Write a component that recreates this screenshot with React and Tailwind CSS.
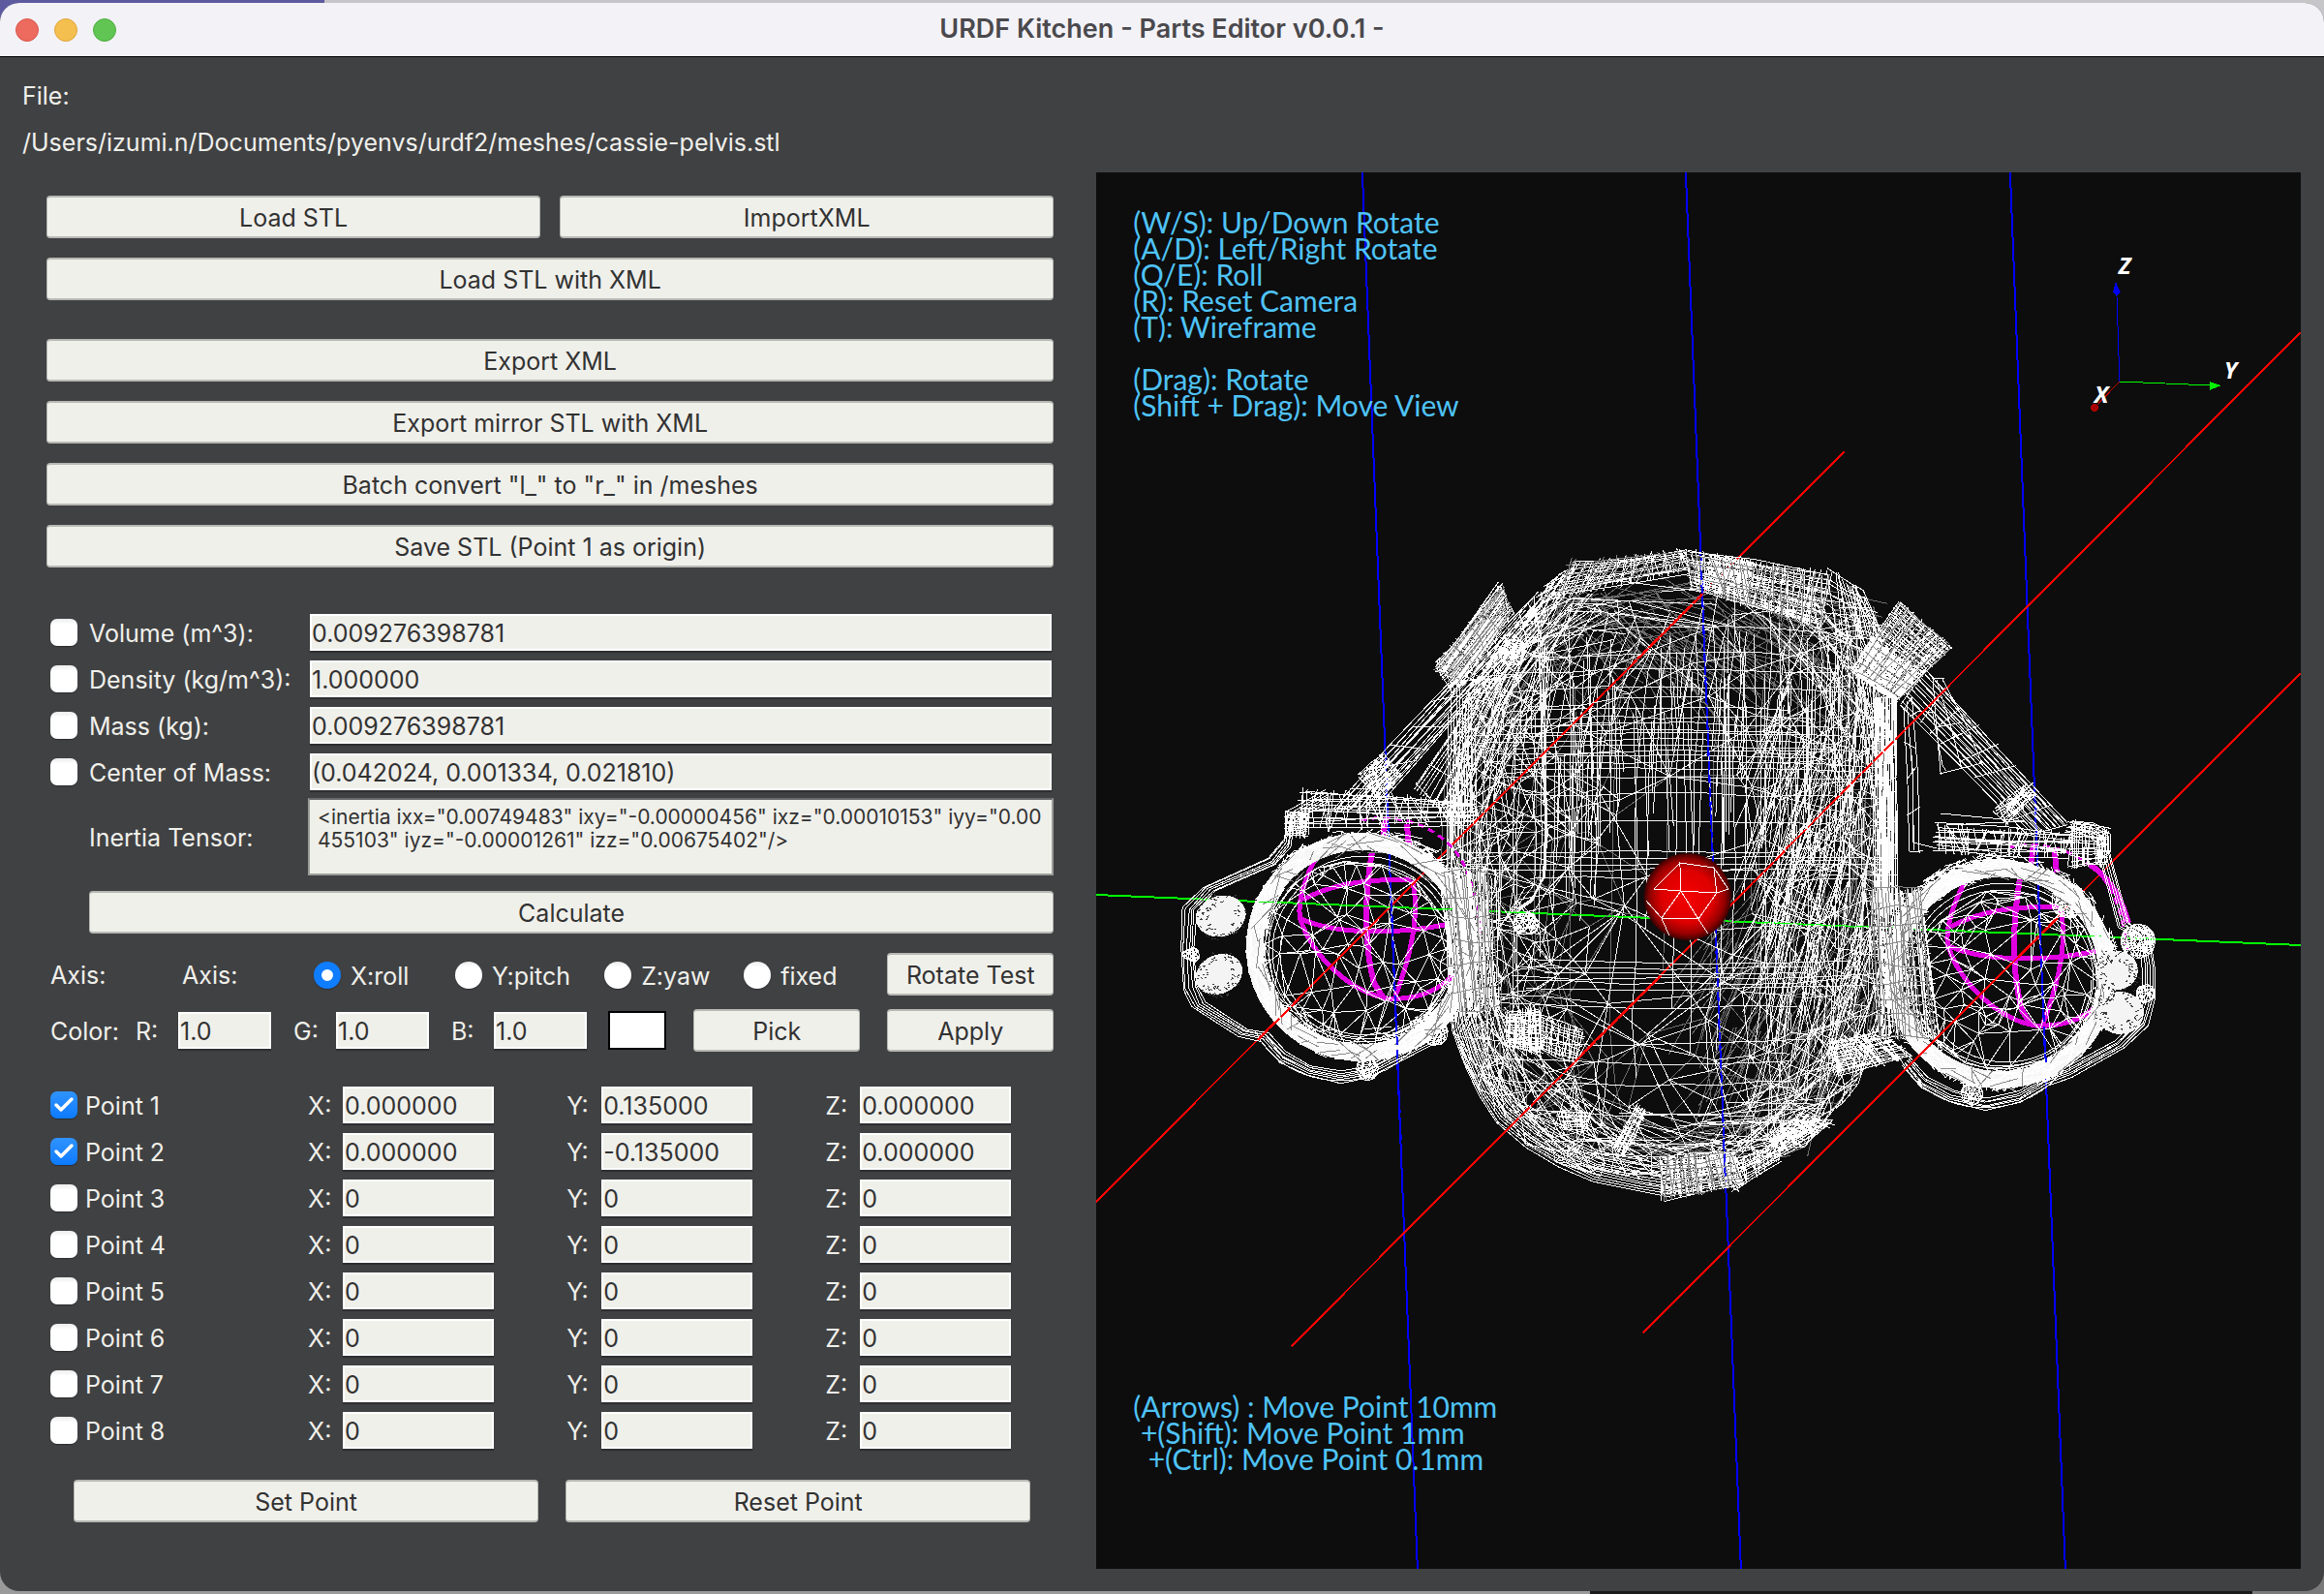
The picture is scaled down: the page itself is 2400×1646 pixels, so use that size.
import { Check } from "lucide-react";

/* ---------- wireframe geometry ---------- */

let seed = 90210;
const rnd = () => {
  seed = (seed + 0x6d2b79f5) | 0;
  let t = Math.imul(seed ^ (seed >>> 15), 1 | seed);
  t = (t + Math.imul(t ^ (t >>> 7), 61 | t)) ^ t;
  return ((t ^ (t >>> 14)) >>> 0) / 4294967296;
};
const jit = (n) => (rnd() - 0.5) * 2 * n;
const mix = (a, b, t) => a + (b - a) * t;
const r1 = (n) => Math.round(n * 10) / 10;
const seg = (x1, y1, x2, y2) => `M${r1(x1)} ${r1(y1)}L${r1(x2)} ${r1(y2)}`;
const poly = (pts) => "M" + pts.map(([x, y]) => `${r1(x)} ${r1(y)}`).join("L");

/* Bowyer-Watson triangulation, returned as unique edges. */
function triangulate(points) {
  const n = points.length;
  const [ox, oy] = points[0];
  const pts = [...points.map(([x, y]) => [x - ox, y - oy]), [-9000, -7000], [9000, -7100], [100, 9000]];
  const circle = (a, b, c) => {
    const [ax, ay] = pts[a];
    const [bx, by] = pts[b];
    const [cx, cy] = pts[c];
    const d = 2 * (ax * (by - cy) + bx * (cy - ay) + cx * (ay - by)) || 1e-6;
    const a2 = ax * ax + ay * ay;
    const b2 = bx * bx + by * by;
    const c2 = cx * cx + cy * cy;
    const x = (a2 * (by - cy) + b2 * (cy - ay) + c2 * (ay - by)) / d;
    const y = (a2 * (cx - bx) + b2 * (ax - cx) + c2 * (bx - ax)) / d;
    return { v: [a, b, c], x, y, r: (ax - x) ** 2 + (ay - y) ** 2 };
  };
  let tris = [circle(n, n + 1, n + 2)];
  for (let i = 0; i < n; i++) {
    const [px, py] = pts[i];
    const edges = new Map();
    tris = tris.filter((t) => {
      if ((px - t.x) ** 2 + (py - t.y) ** 2 > t.r) return true;
      [[0, 1], [1, 2], [2, 0]].forEach(([p, q]) => {
        const a = Math.min(t.v[p], t.v[q]);
        const b = Math.max(t.v[p], t.v[q]);
        const key = a * 10000 + b;
        if (edges.has(key)) edges.set(key, null);
        else edges.set(key, [a, b]);
      });
      return false;
    });
    edges.forEach((e) => e && tris.push(circle(e[0], e[1], i)));
  }
  const out = new Map();
  tris.forEach(({ v }) => {
    [[0, 1], [1, 2], [2, 0]].forEach(([p, q]) => {
      const a = Math.min(v[p], v[q]);
      const b = Math.max(v[p], v[q]);
      if (b < n) out.set(a * 10000 + b, [points[a], points[b]]);
    });
  });
  return [...out.values()];
}

const LEFT = [[572, 1715], [580, 1650], [588, 1614], [612, 1588], [640, 1560], [700, 1515], [760, 1498], [900, 1492], [1054, 1496], [1100, 1512], [1151, 1536], [1180, 1570], [1201, 1603], [1224, 1654], [1236, 1730]];
const RIGHT = [[572, 1780], [580, 1830], [590, 1890], [611, 1925], [640, 1945], [720, 1956], [900, 1958], [1040, 1950], [1105, 1930], [1151, 1898], [1178, 1880], [1213, 1815], [1236, 1760]];
const at = (table, y) => {
  for (let i = 1; i < table.length; i++) {
    if (y <= table[i][0]) {
      const [y0, x0] = table[i - 1];
      const [y1, x1] = table[i];
      return mix(x0, x1, Math.max(0, (y - y0) / (y1 - y0)));
    }
  }
  return table[table.length - 1][1];
};
const shell = (k, y) => mix(at(LEFT, y), at(RIGHT, y), (k + 1) / 2);

const edgePoint = (t, s = 1) => {
  const a = t * Math.PI * 2;
  const y = 904 - Math.cos(a) * 332;
  const k = Math.sin(a) >= 0 ? 1 : -1;
  return [mix(1735, shell(k, y), s), mix(904, y, s)];
};

function buildBody() {
  let fine = "";
  let dim = "";
  for (let i = 0; i < 44; i++) {
    const k = Math.sin(mix(-1.5, 1.5, i / 43)) + jit(0.03);
    const pts = [];
    const top = 600 + rnd() * 70;
    const end = 1200 - rnd() * 260;
    for (let y = top; y < end; y += 60) pts.push([shell(k, y) + jit(2), y]);
    if (i % 3) fine += poly(pts);
    else dim += poly(pts);
  }
  const bands = [660, 684, 700, 718, 738, 748, 754, 760, 764, 770, 776, 781, 786, 792, 798, 806, 824, 850, 880, 886, 892, 898, 906, 990, 995, 1000, 1005, 1010, 1016, 1034, 1070, 1090, 1110, 1140, 1168];
  bands.forEach((y) => {
    const a = mix(-0.98, -0.5, rnd());
    const b = mix(0.5, 0.98, rnd());
    const bow = (y - 900) * 0.05;
    const pts = [];
    for (let i = 0; i <= 6; i++) {
      const k = mix(a, b, i / 6);
      pts.push([shell(k, y), y + bow * (1 - k * k) + jit(2)]);
    }
    fine += poly(pts);
  });
  const layers = [
    [230, 1, 0],
    [230, 0.99, 0.35],
    [150, 0.8, 0],
  ];
  layers.forEach(([count, spread, hollow]) => {
    const nodes = [];
    for (let i = 0; i < count; i++) {
      const y = mix(615, 1215, rnd());
      const k = Math.sign(jit(1)) * mix(hollow, spread, Math.sqrt(rnd()));
      nodes.push([shell(k, y), y]);
    }
    triangulate(nodes).forEach(([a, b]) => {
      const len = Math.hypot(a[0] - b[0], a[1] - b[1]);
      if (len > 130) return;
      if (rnd() < 0.68) fine += seg(...a, ...b);
      else dim += seg(...a, ...b);
    });
  });
  for (let i = 0; i < 420; i++) {
    const t = rnd();
    const a = edgePoint(t, mix(0.82, 1, rnd()));
    const b = edgePoint(t + mix(0.03, 0.13, rnd()), mix(0.74, 1, rnd()));
    if (Math.hypot(a[0] - b[0], a[1] - b[1]) > 190) continue;
    if (rnd() < 0.5) fine += seg(...a, ...b);
    else dim += seg(...a, ...b);
  }
  for (let i = 0; i < 90; i++) {
    const x = mix(1600, 1900, rnd());
    const y = mix(640, 790, rnd());
    fine += seg(x, y, x + jit(6), y + mix(40, 170, rnd()));
  }
  for (let i = 0; i < 110; i++) {
    const x = mix(1830, 1930, rnd());
    const y = mix(700, 1040, rnd());
    fine += seg(x, y, x - mix(5, 50, rnd()), y + mix(60, 150, rnd()));
  }
  for (let i = 0; i < 70; i++) {
    const x = mix(1620, 1860, rnd());
    const y = mix(600, 680, rnd());
    dim += seg(x, y, x + mix(40, 120, rnd()), y + mix(20, 110, rnd()));
    const u = mix(1780, 1900, rnd());
    const v = mix(900, 1100, rnd());
    dim += seg(u, v, u - mix(20, 70, rnd()), v + mix(60, 120, rnd()));
  }
  for (let i = 0; i < 13; i++) {
    const s = 1 - i * 0.008;
    const pts = [];
    for (let t = 0.51; t < 0.74; t += 0.02) pts.push(edgePoint(t, s));
    fine += poly(pts.map(([x, y]) => [x + jit(1), y + jit(1)]));
  }
  for (let i = 0; i < 9; i++) {
    fine += poly([[1588 + i * 2, 640 + i * 6], [1594 + jit(3), 760], [1597 + jit(2), 860], [1594 + jit(2), 905], [1583, 928 + jit(3)], [1567, 940 + jit(3)]]);
    fine += seg(1496 + i * 3, 720 + jit(20), 1494 + i * 3, 880 + jit(30));
  }
  return { fine, dim };
}

/* Bilinear hatch of a quad: long strands plus cross facets. */
function quad([a, b, c, d], along, across, fuzz = 2) {
  const p = (u, v) => [
    mix(mix(a[0], b[0], u), mix(d[0], c[0], u), v) + jit(fuzz),
    mix(mix(a[1], b[1], u), mix(d[1], c[1], u), v) + jit(fuzz),
  ];
  let out = "";
  for (let i = 0; i <= along; i++) {
    const v = i / along;
    out += poly([p(0, v), p(0.5, v), p(1, v)]);
  }
  for (let i = 0; i <= across; i++) {
    const u = i / across;
    out += seg(...p(u, 0), ...p(Math.min(1, Math.max(0, u + jit(0.08))), 1));
  }
  return out;
}

function ring(cx, cy, inner, outer, count, from = 0, to = 360) {
  let out = "";
  for (let i = 0; i < count; i++) {
    const t = (mix(from, to, rnd()) * Math.PI) / 180;
    const dt = mix(0.04, 0.35, rnd());
    const p = mix(inner, outer, rnd());
    const q = mix(inner, outer, rnd());
    out += seg(cx + Math.cos(t) * p, cy + Math.sin(t) * p, cx + Math.cos(t + dt) * q, cy + Math.sin(t + dt) * q);
  }
  return out;
}

function disc(cx, cy, r, count) {
  const nodes = [];
  for (let i = 0; i < count; i++) {
    const t = rnd() * Math.PI * 2;
    const d = i < count / 4 ? r * mix(0.96, 1, rnd()) : Math.sqrt(rnd()) * r;
    nodes.push([cx + Math.cos(t) * d, cy + Math.sin(t) * d]);
  }
  return triangulate(nodes).map(([a, b]) => seg(...a, ...b)).join("");
}

const arc = (cx, cy, rx, ry, from, to) => {
  const pts = [];
  for (let a = from; a <= to; a += 8) {
    const t = (a * Math.PI) / 180;
    pts.push([cx + Math.cos(t) * rx, cy + Math.sin(t) * ry]);
  }
  return poly(pts);
};

const body = buildBody();

const LOBE_L = [[1370, 815], [1330, 838], [1326, 866], [1310, 886], [1243, 916], [1222, 938], [1219, 980], [1222, 1022], [1231, 1040], [1279, 1070], [1302, 1075], [1322, 1097], [1350, 1111], [1384, 1118], [1414, 1112], [1441, 1098], [1480, 1078], [1496, 1050]];
const LOBE_R = [[2139, 848], [2163, 850], [2179, 861], [2179, 882], [2198, 953], [2221, 966], [2226, 1000], [2226, 1030], [2218, 1059], [2194, 1082], [2139, 1112], [2115, 1121], [2086, 1138], [2050, 1146], [2013, 1137], [1984, 1122], [1965, 1100]];
const nested = (pts, cx, cy, n, step) => {
  let out = "";
  for (let i = 0; i < n; i++) {
    const s = 1 - i * step;
    out += poly(pts.map(([x, y]) => [mix(cx, x, s) + jit(1), mix(cy, y, s) + jit(1)]));
  }
  return out;
};

const bright = [
  nested(LOBE_L, 1404, 972, 6, 0.016),
  nested(LOBE_R, 2064, 1000, 6, 0.016),
  ring(1408, 976, 100, 122, 420),
  ring(2066, 1004, 100, 124, 420),
  ring(1420, 972, 88, 118, 190, -80, 80),
  ring(2058, 1000, 88, 118, 190, 120, 260),
  arc(1408, 980, 98, 96, 0, 360),
  arc(1408, 982, 94, 91, 0, 360),
  arc(1410, 984, 88, 85, 20, 220),
  arc(1384, 1030, 96, 86, 20, 160),
  arc(2068, 1008, 98, 96, 0, 360),
  arc(2068, 1010, 94, 91, 0, 360),
  arc(2072, 1012, 88, 85, 0, 200),
  arc(2050, 1058, 96, 86, 20, 160),
  disc(1402, 985, 98, 120),
  disc(2074, 1013, 96, 120),
  quad([[1548, 602], [1562, 634], [1508, 707], [1483, 690]], 22, 36, 3),
  quad([[1530, 640], [1552, 650], [1500, 715], [1482, 685]], 22, 16, 3),
  quad([[1962, 620], [2016, 668], [1962, 722], [1914, 690]], 40, 30, 2),
  quad([[1934, 660], [1985, 694], [1957, 724], [1914, 696]], 36, 30, 3),
  quad([[1936, 720], [1936, 940], [1960, 940], [1958, 720]], 22, 12, 1),
  quad([[1624, 582], [1740, 568], [1745, 590], [1600, 618]], 10, 40, 3),
  quad([[1740, 568], [1890, 592], [1880, 648], [1745, 606]], 20, 56, 3),
  quad([[1764, 574], [1812, 582], [1808, 612], [1764, 600]], 22, 20, 2),
  quad([[1890, 590], [1926, 612], [1950, 660], [1900, 660]], 8, 12, 4),
  quad([[1600, 600], [1626, 584], [1610, 620], [1570, 650]], 10, 8, 3),
  quad([[1556, 1046], [1590, 1040], [1592, 1088], [1556, 1082]], 22, 22, 3),
  quad([[1590, 1048], [1637, 1064], [1630, 1098], [1590, 1084]], 10, 20, 2),
  quad([[1888, 1076], [1940, 1064], [1975, 1092], [1896, 1110]], 18, 34, 3),
  quad([[1666, 1184], [1690, 1140], [1700, 1148], [1678, 1194]], 10, 14, 2),
  quad([[1608, 1148], [1640, 1150], [1642, 1164], [1614, 1166]], 10, 12, 2),
  quad([[1716, 1196], [1790, 1190], [1800, 1222], [1718, 1238]], 24, 44, 3),
  quad([[1828, 1176], [1856, 1150], [1894, 1160], [1840, 1192]], 20, 26, 3),
  quad([[1775, 1205], [1840, 1180], [1838, 1196], [1790, 1230]], 10, 22, 3),
  quad([[1345, 816], [1520, 826], [1524, 850], [1340, 856]], 12, 44, 4),
  quad([[1328, 838], [1352, 838], [1350, 864], [1328, 864]], 14, 14, 2),
  quad([[2138, 848], [2178, 856], [2178, 892], [2138, 896]], 18, 20, 3),
  quad([[2000, 852], [2140, 862], [2136, 884], [2000, 880]], 12, 38, 4),
  quad([[1404, 800], [1428, 778], [1448, 800], [1424, 826]], 14, 16, 2),
  quad([[2060, 836], [2092, 810], [2102, 822], [2072, 852]], 10, 14, 2),
  quad([[1490, 900], [1540, 900], [1548, 1040], [1504, 1046]], 18, 36, 5),
  quad([[1930, 920], [1985, 920], [2000, 1070], [1940, 1070]], 20, 36, 5),
  disc(1562, 674, 14, 70),
  disc(1576, 954, 13, 60),
  disc(1482, 1066, 14, 60),
  disc(2208, 972, 18, 150),
  disc(2216, 1026, 10, 50),
  disc(2136, 930, 18, 110),
  disc(1412, 1104, 12, 40),
  disc(2036, 1130, 12, 40),
  disc(1230, 986, 9, 30),
].join("");

const struts = [
  quad([[1498, 704], [1374, 838], [1420, 836], [1540, 700]], 14, 6, 2),
  quad([[1990, 690], [2136, 850], [2096, 862], [1964, 726]], 14, 8, 2),
  quad([[1590, 610], [1508, 700], [1536, 712], [1596, 640]], 14, 12, 3),
  quad([[1540, 700], [1460, 810], [1496, 850], [1566, 700]], 12, 5, 3),
  quad([[1966, 730], [1972, 880], [1984, 880], [1976, 720]], 2, 4, 2),
  quad([[1996, 700], [2004, 800], [2050, 790], [2006, 700]], 2, 2, 2),
  poly([[1972, 740], [1982, 734], [1996, 736], [2006, 790], [2010, 796]]),
  poly([[2004, 840], [2090, 848], [2010, 852], [2030, 876]]),
  poly([[1975, 780], [1976, 870], [2000, 876]]),
].join("");

const shade = [
  ring(1408, 978, 96, 120, 70),
  ring(2066, 1006, 96, 120, 70),
  quad([[1548, 604], [1560, 634], [1510, 704], [1484, 690]], 4, 12, 4),
  quad([[1740, 572], [1890, 594], [1880, 650], [1745, 604]], 4, 24, 5),
  quad([[1620, 580], [1740, 570], [1745, 588], [1610, 612]], 2, 18, 4),
  quad([[1716, 1196], [1790, 1190], [1800, 1222], [1718, 1238]], 6, 18, 4),
  quad([[1962, 622], [2014, 668], [1962, 720], [1916, 692]], 8, 10, 3),
  quad([[1490, 900], [1540, 900], [1548, 1040], [1504, 1046]], 6, 14, 5),
  quad([[1930, 920], [1985, 920], [2000, 1070], [1940, 1070]], 8, 16, 5),
].join("");

const specks = [
  [1261, 946, 26],
  [1259, 1006, 25],
  [2186, 1004, 24],
  [2188, 1044, 26],
].map(([cx, cy, r]) => {
  let out = "";
  for (let i = 0; i < 80; i++) {
    const t = rnd() * Math.PI * 2;
    const d = mix(0.5, 1, rnd()) * r;
    const x = cx + Math.cos(t) * d;
    const y = cy + Math.sin(t) * d;
    out += seg(x, y, x + 2, y + jit(2));
  }
  return out;
}).join("");

function Globe({ x, y }) {
  return (
    <g transform={`translate(${x} ${y})`} fill="none" stroke="#e000e0" strokeWidth="6">
      <path d="M-71 -60C-90 -30 -95 0 -92 12C-80 50 -40 88 -2 94C30 96 52 84 66 70" strokeWidth="5" />
      <path d="M-18 -57C-26 -10 -26 40 -16 78L-6 94" />
      <path d="M24 -28C30 0 26 40 6 92" strokeWidth="5" />
      <path d="M-89 -8C-60 -24 -20 -30 22 -28" strokeWidth="5" />
      <path d="M-91 12C-60 26 0 30 62 17" strokeWidth="5" />
      <path d="M-8 -60L-4 -92M20 -64L18 -86" />
      <path d="M-30 -90C20 -100 60 -76 76 -46C86 -26 92 0 93 26" strokeWidth="3" strokeDasharray="7 5" />
    </g>
  );
}

function Scene() {
  return (
    <svg
      className="absolute inset-0 size-full"
      viewBox="1132 178 1244 1442"
      preserveAspectRatio="xMidYMid slice"
      shapeRendering="crispEdges"
      role="img"
      aria-label="Wireframe of cassie-pelvis.stl"
    >
      <defs>
        <radialGradient id="origin" cx="0.5" cy="0.5" r="0.5">
          <stop offset="0" stopColor="#f50000" />
          <stop offset="0.6" stopColor="#dd0000" />
          <stop offset="0.85" stopColor="#960000" />
          <stop offset="1" stopColor="#3c0000" />
        </radialGradient>
      </defs>
      <g strokeWidth="2" fill="none">
        <path d="M1407 178L1464 1620M1741 178L1798 1620M2076 178L2133 1620" stroke="#0000ff" />
        <path d="M1132 924L2376 976" stroke="#00ff00" />
        <path d="M1132 1241L1905 466M1334 1390L2376 343M1697 1376L2376 695" stroke="#ff0000" />
      </g>
      <g fill="none" strokeWidth="1">
        <path d={body.dim} stroke="#6e6e6e" />
        <path d={body.fine} stroke="#f4f4f4" />
        <path d={struts} stroke="#ffffff" />
      </g>
      <Globe x={1435} y={937} />
      <Globe x={2104} y={965} />
      <path d="M2159 893C2180 908 2192 930 2198 953" fill="none" stroke="#e000e0" strokeWidth="6" />
      <g fill="none">
        <ellipse cx="1406" cy="978" rx="110" ry="109" stroke="#f6f6f6" strokeWidth="18" />
        <ellipse cx="2066" cy="1006" rx="110" ry="109" stroke="#f6f6f6" strokeWidth="18" />
        <path d={bright} stroke="#ffffff" strokeWidth="1" />
        <path d={shade} stroke="#8a8a8a" strokeWidth="1" />
      </g>
      <g fill="#f4f4f4">
        <ellipse cx="1261" cy="946" rx="26" ry="21" transform="rotate(-15 1261 946)" />
        <ellipse cx="1259" cy="1006" rx="25" ry="20" transform="rotate(-25 1259 1006)" />
        <ellipse cx="2186" cy="1002" rx="22" ry="20" />
        <ellipse cx="2190" cy="1046" rx="24" ry="22" />
      </g>
      <path d={specks} fill="none" stroke="#3a3a3a" strokeWidth="1" />
      <g strokeWidth="2" fill="none">
        <path d="M1300 1073L1465 907M1500 872L1758 614M1536 1187L1716 1007M1788 934L2010 711" stroke="#ff0000" strokeDasharray="14 2" />
        <path d="M1965 1107L2125 948" stroke="#ff0000" />
        <path d="M1300 931L1500 939M1560 942L1930 957M2000 960L2170 967" stroke="#00ff00" strokeWidth="1" strokeDasharray="16 5" />
        <path d="M1437 930L1447 1180M1757 590L1782 1220M2105 920L2113 1100" stroke="#0000ff" strokeDasharray="9 5" />
      </g>
      <circle cx="1743" cy="926" r="45" fill="url(#origin)" shapeRendering="auto" />
      <path
        d="M1735 891L1770 896L1773 922L1736 920ZM1735 891L1708 918L1736 920L1716 948L1700 930M1736 920L1754 949L1716 948L1724 966M1773 922L1754 949L1764 964M1770 896L1785 918L1773 922"
        fill="none"
        stroke="#ffffff"
        strokeWidth="1"
      />
      <g fill="none" strokeWidth="1">
        <path d="M2189 394L2186 302" stroke="#0000ff" />
        <path d="M2189 394L2284 398" stroke="#00ff00" />
        <path d="M2189 394L2165 419" stroke="#c00000" />
      </g>
      <path d="M2185 291L2190 302L2186 305L2182 302Z" fill="#0000f0" />
      <path d="M2294 398L2282 394V403Z" fill="#00f000" />
      <circle cx="2163" cy="421" r="4" fill="#a80000" />
      <g fill="#ffffff" className="font-['Noto_Sans','DejaVu_Sans',sans-serif] text-[24px] font-bold italic" shapeRendering="auto">
        <text x="2188" y="283">Z</text>
        <text x="2297" y="391">Y</text>
        <text x="2163" y="416">X</text>
      </g>
    </svg>
  );
}

/* ---------- form controls ---------- */

function Button({ children, className = "" }) {
  return (
    <button
      type="button"
      className={`h-11 rounded-sm border-2 border-x border-[#b8b8b4] bg-[#f0f0eb] pt-0.5 text-center text-[#323232] ${className}`}
    >
      {children}
    </button>
  );
}

function Field({ className = "", ...props }) {
  return (
    <input
      type="text"
      className={`h-[38px] min-w-0 border-2 border-white bg-[#f0f0eb] pt-0.5 text-[#323232] shadow-[0_2px_1px_#2f2f31] outline-none ${className}`}
      {...props}
    />
  );
}

function Tick({ checked, ...props }) {
  return (
    <span className="grid shrink-0">
      <input
        type="checkbox"
        defaultChecked={checked}
        className="peer col-start-1 row-start-1 size-7 appearance-none rounded-[7px] bg-linear-to-b from-[#ececec] to-white to-20% shadow-[0_1px_1px_#2c2c2e] checked:from-[#2f93ff] checked:to-[#0a7aff] checked:to-100%"
        {...props}
      />
      <Check
        className="pointer-events-none invisible col-start-1 row-start-1 size-6 place-self-center text-white peer-checked:visible"
        strokeWidth={3.5}
        aria-hidden="true"
      />
    </span>
  );
}

function Axis({ label, checked }) {
  return (
    <label className="flex items-center gap-[10px] pt-0.5">
      <input
        type="radio"
        name="axis"
        defaultChecked={checked}
        className="size-7 appearance-none rounded-full bg-linear-to-b from-[#ececec] to-white to-20% shadow-[0_1px_1px_#2c2c2e] checked:border-8 checked:border-[#0f7dff] checked:from-white"
      />
      <span className="pt-0.5">{label}</span>
    </label>
  );
}

const PROPERTIES = [
  ["volume", "Volume (m^3):", "0.009276398781"],
  ["density", "Density (kg/m^3):", "1.000000"],
  ["mass", "Mass (kg):", "0.009276398781"],
  ["center", "Center of Mass:", "(0.042024, 0.001334, 0.021810)"],
];

const POINTS = [
  ["0.000000", "0.135000", "0.000000", true],
  ["0.000000", "-0.135000", "0.000000", true],
  ["0", "0", "0", false],
  ["0", "0", "0", false],
  ["0", "0", "0", false],
  ["0", "0", "0", false],
  ["0", "0", "0", false],
  ["0", "0", "0", false],
];

const INERTIA =
  '<inertia ixx="0.00749483" ixy="-0.00000456" ixz="0.00010153" iyy="0.00455103" iyz="-0.00001261" izz="0.00675402"/>';

function TitleBar() {
  return (
    <header className="grid h-14 shrink-0 grid-cols-[1fr_auto_1fr] items-center border-b border-black bg-[#f3f2f7] px-4">
      <div className="flex gap-4">
        <button type="button" aria-label="Close" className="size-6 rounded-full border border-[#d9574b] bg-[#ec6a5e]" />
        <button type="button" aria-label="Minimize" className="size-6 rounded-full border border-[#dca63c] bg-[#f5bf4f]" />
        <button type="button" aria-label="Zoom" className="size-6 rounded-full border border-[#50ab40] bg-[#61c554]" />
      </div>
      <h1 className="pb-0.5 text-[27px] leading-8 font-semibold text-[#4a494d]">URDF Kitchen - Parts Editor v0.0.1 -</h1>
    </header>
  );
}

function Panel() {
  return (
    <form className="flex flex-col px-6 pt-6 leading-8">
      <div className="grid grid-cols-2 gap-5">
        <Button>Load STL</Button>
        <Button>ImportXML</Button>
        <Button className="col-span-2">Load STL with XML</Button>
      </div>
      <div className="mt-10 grid gap-5">
        <Button>Export XML</Button>
        <Button>Export mirror STL with XML</Button>
        <Button>Batch convert "l_" to "r_" in /meshes</Button>
        <Button>Save STL (Point 1 as origin)</Button>
      </div>

      <div className="mt-12 grid gap-[10px] pr-0.5 pl-1">
        {PROPERTIES.map(([id, label, value]) => (
          <div key={id} className="flex items-center">
            <Tick aria-label={`Use ${label}`} />
            <label htmlFor={id} className="ml-3 w-[228px] shrink-0 pt-0.5 whitespace-nowrap">
              {label}
            </label>
            <Field id={id} defaultValue={value} className="flex-1" />
          </div>
        ))}
      </div>
      <div className="mt-2 flex items-center pl-11">
        <label htmlFor="inertia" className="w-[226px] shrink-0 pt-0.5">
          Inertia Tensor:
        </label>
        <textarea
          id="inertia"
          defaultValue={INERTIA}
          className="h-20 min-w-0 flex-1 resize-none overflow-hidden border-2 border-[#9c9c9a] border-t-[#6a6a6a] bg-[#f0f0eb] py-1.5 pr-1 pl-2 text-[21px] leading-6 break-all text-[#323232] outline-none"
        />
      </div>
      <Button className="mt-4 ml-11">Calculate</Button>

      <fieldset className="mt-5 grid grid-cols-[136px_136px_146fr_154fr_144fr_148fr_172px] items-center pl-1">
        <span className="pt-0.5">Axis:</span>
        <span className="pt-0.5">Axis:</span>
        <Axis label="X:roll" checked />
        <Axis label="Y:pitch" />
        <Axis label="Z:yaw" />
        <Axis label="fixed" />
        <Button>Rotate Test</Button>
      </fieldset>

      <div className="mt-[14px] flex items-center justify-between pl-1">
        <div className="flex items-center">
          <span className="w-[88px] pt-0.5">Color:</span>
          <div className="flex gap-[23px]">
            {["R", "G", "B"].map((c) => (
              <label key={c} className="flex items-center">
                <span className="w-11 pt-0.5">{c}:</span>
                <Field defaultValue="1.0" className="w-24" />
              </label>
            ))}
          </div>
          <div className="ml-[22px] h-10 w-[60px] border-2 border-black bg-white" />
        </div>
        <div className="flex gap-7">
          <Button className="w-[172px]">Pick</Button>
          <Button className="w-[172px]">Apply</Button>
        </div>
      </div>

      <div className="mt-9 grid gap-[10px] pr-11 pl-1">
        {POINTS.map(([x, y, z, on], i) => (
          <div key={i} className="flex items-center justify-between">
            <label className="flex w-[191px] items-center gap-2">
              <Tick checked={on} />
              <span className="pt-0.5">Point {i + 1}</span>
            </label>
            {[["X", x], ["Y", y], ["Z", z]].map(([axis, value]) => (
              <label key={axis} className="flex items-center">
                <span className="w-9 pt-0.5">{axis}:</span>
                <Field defaultValue={value} className="w-[156px]" />
              </label>
            ))}
          </div>
        ))}
      </div>

      <div className="mt-8 grid grid-cols-2 gap-7 pr-6 pl-7">
        <Button>Set Point</Button>
        <Button>Reset Point</Button>
      </div>
    </form>
  );
}

function Viewport() {
  return (
    <section className="relative overflow-hidden bg-[#0d0d0d] font-['Lato',sans-serif] text-[30px] leading-[27px] whitespace-pre text-[#4fc3f7]">
      <Scene />
      <p className="absolute top-[38px] left-[38px]">
        {"(W/S): Up/Down Rotate\n(A/D): Left/Right Rotate\n(Q/E): Roll\n(R): Reset Camera\n(T): Wireframe\n\n(Drag): Rotate\n(Shift + Drag): Move View"}
      </p>
      <p className="absolute bottom-[100px] left-[38px]">
        {"(Arrows) : Move Point 10mm\n +(Shift): Move Point 1mm\n  +(Ctrl): Move Point 0.1mm"}
      </p>
    </section>
  );
}

export default function App() {
  return (
    <div className="flex min-h-screen flex-col bg-[linear-gradient(to_right,#5d5ba0_335px,#c6c6c8_335px),linear-gradient(to_right,#9a9a9a_1642px,#1a1a1a_1642px,#1a1a1a_2326px,#7a7a7a_2326px)] bg-[size:100%_50%] bg-[position:top,bottom] bg-no-repeat py-[3px] font-['Inter',sans-serif] text-[25px] text-[#f0f0eb]">
      <div className="flex flex-1 flex-col overflow-hidden rounded-[20px] bg-[#404143]">
        <TitleBar />
        <div className="px-[23px] pt-[22px] leading-9">
          <p>File:</p>
          <p className="mt-3">/Users/izumi.n/Documents/pyenvs/urdf2/meshes/cassie-pelvis.stl</p>
        </div>
        <main className="mt-[13px] grid flex-1 grid-cols-[7fr_8fr] gap-5 px-6 pb-[23px]">
          <Panel />
          <Viewport />
        </main>
      </div>
    </div>
  );
}
